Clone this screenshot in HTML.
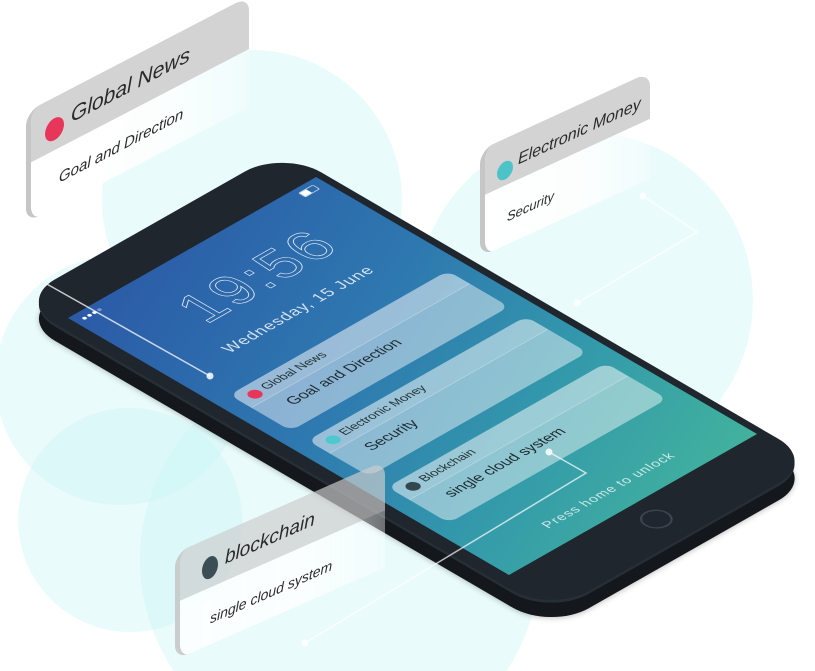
<!DOCTYPE html>
<html><head><meta charset="utf-8">
<style>
html,body{margin:0;padding:0;background:#fff;}
body{width:815px;height:671px;position:relative;overflow:hidden;font-family:"Liberation Sans",sans-serif;}
#wrap{position:absolute;left:0;top:0;width:815px;height:671px;overflow:hidden;}
.abs{position:absolute;left:0;top:0;transform-origin:0 0;}
.ph{width:300px;height:530px;transform:matrix(0.827,-0.47,0.832,0.485,68,318);}
.body{position:absolute;left:-14px;top:-48px;width:322px;height:642px;border-radius:46px;background:#1f262d;box-shadow:-3px 3px 0 #262e36,-18px 18px 0 #14181c,-19px 19px 6px rgba(0,0,0,.25);}
.scr{position:absolute;left:0;top:0;width:300px;height:530px;background:linear-gradient(155deg,#2b5aa7 0%,#2e78b0 40%,#3399ab 70%,#42b29d 100%);overflow:hidden;}
.time{position:absolute;left:60px;top:34px;width:200px;text-align:center;font-size:60px;color:transparent;-webkit-text-stroke:0.8px rgba(255,255,255,.85);letter-spacing:3px;}
.date{position:absolute;left:40px;top:118px;width:220px;text-align:center;font-size:17px;color:rgba(255,255,255,.8);letter-spacing:1px;}
.nc{position:absolute;left:18px;width:264px;height:74px;border-radius:10px;background:rgba(255,255,255,.45);overflow:hidden;}
.nc .h{position:absolute;left:0;top:0;width:100%;height:26px;background:rgba(255,255,255,.12);border-bottom:1px solid rgba(255,255,255,.25);}
.nc .d{position:absolute;left:10px;top:8px;width:13px;height:13px;border-radius:50%;}
.nc .t{position:absolute;left:28px;top:5px;font-size:13px;color:#233;}
.nc .b{position:absolute;left:28px;top:36px;font-size:16px;color:#1d2a30;}
.home{position:absolute;left:135px;top:545px;width:24px;height:24px;border:2px solid #3a4550;border-radius:50%;}
.unlock{position:absolute;left:50px;top:492px;width:200px;text-align:center;font-size:14px;color:rgba(255,255,255,.75);letter-spacing:1px;}
.fc{position:absolute;left:0;top:0;transform-origin:0 0;}
.fc .card{position:absolute;left:0;top:0;border-radius:14px 14px 0 14px;border-left:5px solid #c6c6c6;overflow:hidden;}
.fc .hd{position:absolute;left:0;top:0;width:100%;background:#d3d3d3;}
.fc .bd{position:absolute;left:0;width:100%;bottom:0;background:linear-gradient(90deg,#fff 0%,rgba(255,255,255,.85) 60%,rgba(255,255,255,.3) 100%);}
.fc .dot{position:absolute;border-radius:50%;}
.fc .tt{position:absolute;color:#2a2a2a;font-style:italic;white-space:nowrap;line-height:1;}
</style></head><body><div id="wrap">
<svg class="abs" width="815" height="671">
 <g fill="#c8f4f4" fill-opacity=".4">
  <circle cx="252" cy="200" r="150"/>
  <circle cx="585" cy="300" r="168"/>
  <circle cx="120" cy="380" r="125"/>
  <circle cx="130" cy="520" r="112"/>
  <circle cx="340" cy="560" r="200"/>
 </g>
</svg>

<div class="fc" style="transform:matrix(1,-0.52,0,1,26,112)">
 <div class="card" style="width:218px;height:111px;">
  <div class="bd" style="height:58px;"></div>
  <div class="hd" style="height:53px;"></div>
 </div>
 <div class="dot" style="left:19px;top:21px;width:19px;height:22px;background:#e8365a;"></div>
 <div class="tt" style="left:45px;top:17px;font-size:21px;">Global News</div>
 <div class="tt" style="left:33px;top:76px;font-size:15px;">Goal and Direction</div>
</div>

<div class="fc" style="transform:matrix(1,-0.46,0,1,480,150)">
 <div class="card" style="width:165px;height:107px;">
  <div class="bd" style="height:60px;"></div>
  <div class="hd" style="height:47px;"></div>
 </div>
 <div class="dot" style="left:17px;top:23px;width:16px;height:18px;background:#4dc3c9;"></div>
 <div class="tt" style="left:38px;top:20px;font-size:16px;">Electronic Money</div>
 <div class="tt" style="left:27px;top:73px;font-size:13px;">Security</div>
</div>

<div class="abs ph">
 <div class="body"></div>
 <div class="scr">
  <div style="position:absolute;left:8px;top:8px;width:4px;height:4px;border-radius:50%;background:#fff;box-shadow:6px 0 #fff,12px 0 #fff,18px 0 rgba(255,255,255,.4);"></div>
  <div style="position:absolute;left:272px;top:6px;width:16px;height:7px;border:1px solid rgba(255,255,255,.7);border-radius:2px;"><div style="width:8px;height:7px;background:#fff;"></div></div>
  <div class="time">19:56</div>
  <div class="date">Wednesday, 15 June</div>
  <div class="nc" style="top:176px;"><div class="h"></div><div class="d" style="background:#e8365a"></div><div class="t">Global News</div><div class="b">Goal and Direction</div></div>
  <div class="nc" style="top:270px;"><div class="h"></div><div class="d" style="background:#4dc8cf"></div><div class="t">Electronic Money</div><div class="b">Security</div></div>
  <div class="nc" style="top:366px;"><div class="h"></div><div class="d" style="background:#34474f"></div><div class="t">Blockchain</div><div class="b">single cloud system</div></div>
  <div class="unlock">Press home to unlock</div>
 </div>
 <div class="home"></div>
</div>

<svg class="abs" width="815" height="671">
 <g stroke="rgba(255,255,255,.75)" stroke-width="1.5" fill="none">
  <polyline points="45,283 210,376"/>
  <polyline points="549,452 586,473 305,643" stroke="rgba(255,255,255,.7)"/>
  <polyline points="643,196 697,232 577,303" stroke="rgba(255,255,255,.8)"/>
 </g>
 <g fill="rgba(255,255,255,.85)">
  <circle cx="210" cy="376" r="3.5"/>
  <circle cx="549" cy="452" r="3.5"/>
  <circle cx="305" cy="643" r="3.5"/>
  <circle cx="643" cy="196" r="3.5"/>
  <circle cx="577" cy="303" r="3.5"/>
 </g>
</svg>

<div class="fc" style="transform:matrix(1,-0.44,0,1,175,553)">
 <div class="card" style="width:205px;height:107px;opacity:.85;">
  <div class="bd" style="height:57px;background:linear-gradient(90deg,#fff 0%,rgba(255,255,255,.9) 60%,rgba(255,255,255,.45) 100%);"></div>
  <div class="hd" style="height:50px;background:rgba(205,205,205,.8);"></div>
 </div>
 <div class="dot" style="left:27px;top:19px;width:16px;height:22px;background:#3b4d55;"></div>
 <div class="tt" style="left:50px;top:18px;font-size:19px;">blockchain</div>
 <div class="tt" style="left:35px;top:74px;font-size:14px;">single cloud system</div>
</div>
</div></body></html>
